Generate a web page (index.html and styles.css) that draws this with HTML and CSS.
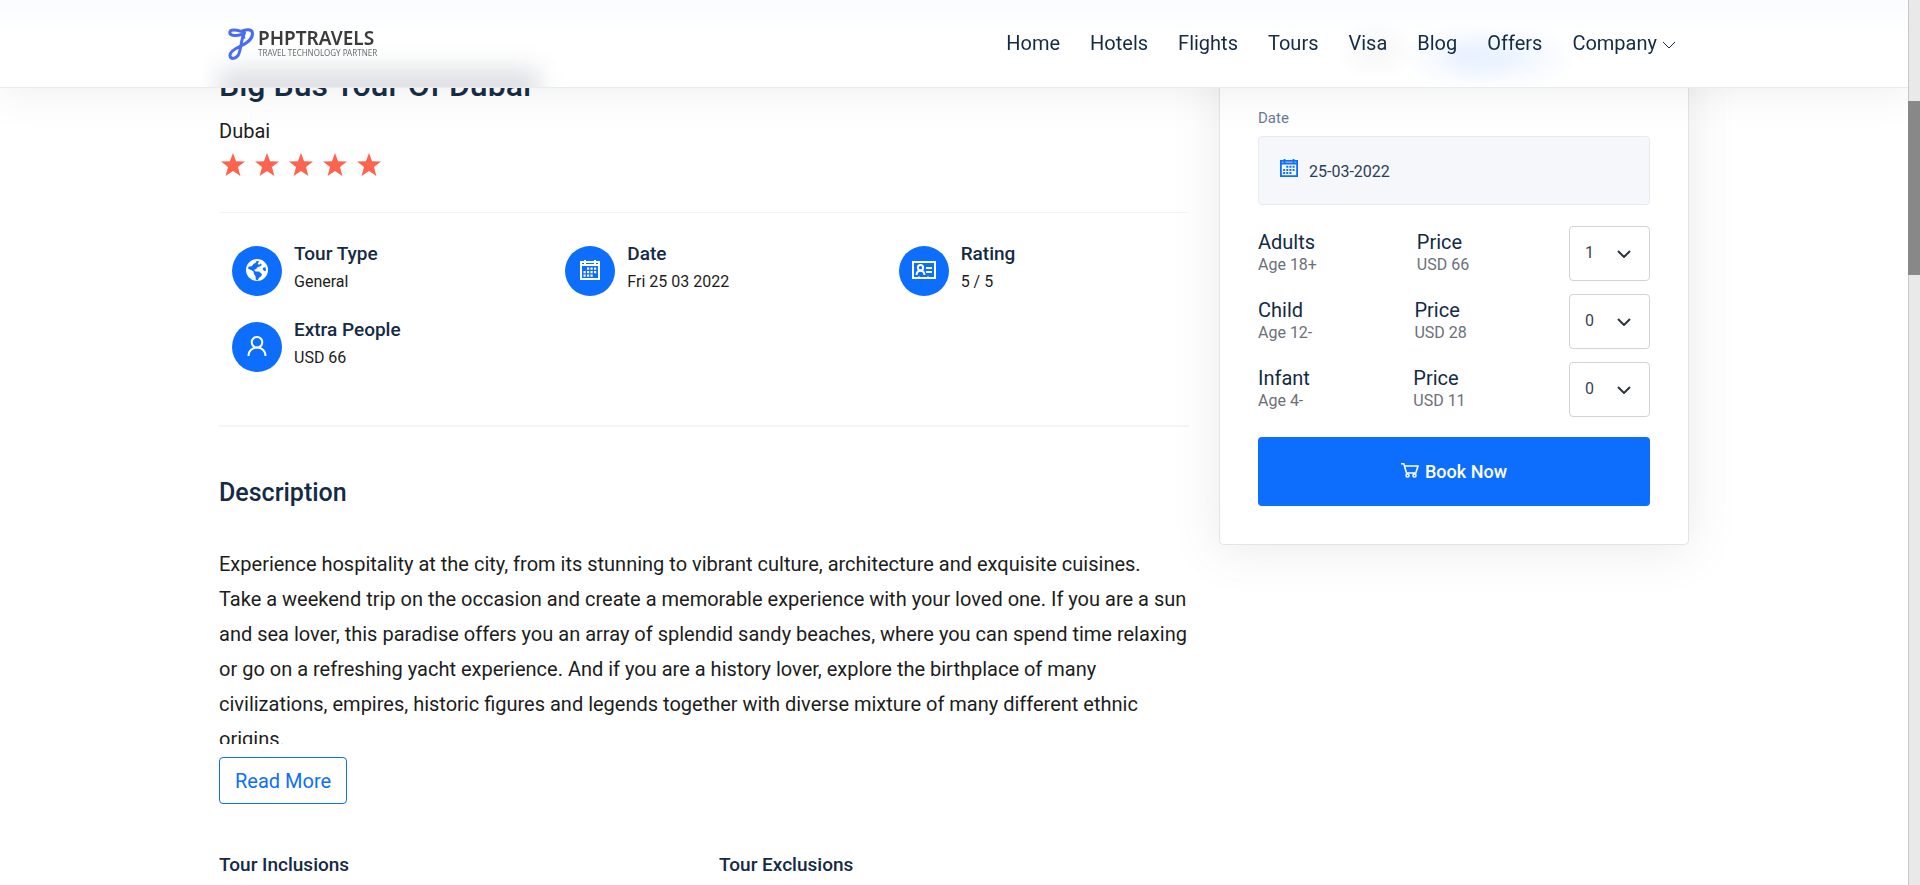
FILE: index.html
```html
<!DOCTYPE html>
<html lang="en">
<head>
<meta charset="utf-8">
<title>Big Bus Tour Of Dubai - PHPTRAVELS</title>
<link rel="stylesheet" href="styles.css">
</head>
<body>
<svg class="sprite" aria-hidden="true">
  <symbol id="star" viewBox="0 0 24 24"><path d="M12 0l3.100 8.200 8.900.4-7 5.500 2.400 8.900-7.400-5.100L4.600 23 7 14.100 0 8.600l8.900-.4z"/></symbol>
  <symbol id="calendar" viewBox="0 0 20 20"><path fill-rule="evenodd" d="M0 1h4V0h2v1h8V0h2v1h4v19H0zM2 3v1h16V3h-2v1h-2V3H6v1H4V3zM2 6v12h16V6z"/><path d="M7 7.500h2.200v2.200H7zM10.500 7.500h2.200v2.200h-2.200zM14 7.500h2.200v2.200H14zM3.500 11h2.200v2.200H3.500zM7 11h2.200v2.200H7zM10.500 11h2.200v2.200h-2.200zM14 11h2.200v2.200H14zM3.500 14.500h2.200v2.200H3.500zM7 14.500h2.200v2.200H7zM10.500 14.500h2.200v2.200h-2.200z"/></symbol>
  <symbol id="globe" viewBox="0 0 22 22"><path fill-rule="evenodd" d="M11 0a11 11 0 1 0 0 22 11 11 0 0 0 0-22zM13.200 2.200L11.500 5l1.800.8 1.500-1.400 1 1.500-2 1.700-2 .4-1.600 2-2.200.9 1.700 1.500 3.300.2 3 2.600-1 2.300-2 1.200-1.400 2.700-1.800-.9-.4-3.400L8 15l-.6-2.700-3-1.500L2 9.500l.7-2 3-.3 1.800-2.200L10 3.500 10.500 2zM17 8.800l2.600-.6.4 3.600-1.800.2-1.400-1.400z"/></symbol>
  <symbol id="card" viewBox="0 0 24 18"><path fill-rule="evenodd" d="M0 0h24v18H0zM2 2v14h4q1-1.500 2 0h7q1-1.500 2 0h5V2z"/><g fill="none" stroke="currentColor" stroke-width="2"><circle cx="8.500" cy="6.700" r="2.600"/><path d="M4.500 14q.3-4.300 4-4.300t4 4.300M14 7h6M14 11h6"/></g></symbol>
  <symbol id="user" viewBox="0 0 20 20"><g fill="none" stroke="currentColor" stroke-width="2"><circle cx="10" cy="6.300" r="5.300"/><path d="M1.500 20c0-5.500 4-8.400 8.500-8.400s8.500 2.900 8.500 8.400"/></g></symbol>
  <symbol id="cart" viewBox="0 0 18 15"><g fill="none" stroke="currentColor" stroke-width="1.600"><path d="M0 .8h2.800L5.500 10h10M4 3h13l-2 6.500"/><circle cx="6.500" cy="12.500" r="1.500"/><circle cx="13.500" cy="12.500" r="1.500"/></g></symbol>
  <symbol id="chevron" viewBox="0 0 14 8"><path d="M1 1l6 6 6-6" fill="none" stroke="currentColor"/></symbol>
</svg>

<header class="header">
  <div class="container header-inner">
    <a class="logo" href="#" aria-label="PHPTRAVELS home">
      <svg class="logo-mark" viewBox="0 0 26 32" stroke="#4a6cf0" stroke-width="3" stroke-linecap="round"><path d="M13.500 6.500C9 7.800 2 8.200 1.800 4.600 1.800.6 8.500 1.800 13 3.300 18 1 24.500.6 24.500 5.500c0 6.500-6 9.700-11.500 12.300C6 21 1.500 24 2 27.800c.5 3.500 5 3.500 7.800 0C13.500 23 12.300 12 16.500 5"/><path d="M13 3.300q3 1.200 3.500 6.700" stroke-width="1.500"/></svg>
      <span class="logo-text"><span class="logo-name">PHPTRAVELS</span><span class="logo-tag">TRAVEL TECHNOLOGY PARTNER</span></span>
    </a>
    <nav class="nav">
      <a href="#">Home</a><a href="#">Hotels</a><a href="#">Flights</a><a href="#">Tours</a><a href="#">Visa</a><a href="#">Blog</a><a href="#">Offers</a>
      <a href="#" class="has-menu">Company <svg class="nav-chevron"><use href="#chevron"/></svg></a>
    </nav>
  </div>
</header>

<main class="container layout">
  <div class="tour">
    <h1>Big Bus Tour Of Dubai</h1>
    <p class="city">Dubai</p>
    <div class="stars" role="img" aria-label="5 stars">
      <svg><use href="#star"/></svg><svg><use href="#star"/></svg><svg><use href="#star"/></svg><svg><use href="#star"/></svg><svg><use href="#star"/></svg>
    </div>
    <section class="features">
      <div class="feature"><span class="badge"><svg width="22" height="22"><use href="#globe"/></svg></span><div><h3>Tour Type</h3><p>General</p></div></div>
      <div class="feature"><span class="badge"><svg width="20" height="20"><use href="#calendar"/></svg></span><div><h3>Date</h3><p>Fri 25 03 2022</p></div></div>
      <div class="feature"><span class="badge"><svg width="24" height="18"><use href="#card"/></svg></span><div><h3>Rating</h3><p>5 / 5</p></div></div>
      <div class="feature"><span class="badge"><svg width="20" height="20"><use href="#user"/></svg></span><div><h3>Extra People</h3><p>USD 66</p></div></div>
    </section>
    <section class="description">
      <h2>Description</h2>
      <p class="excerpt">Experience hospitality at the city, from its stunning to vibrant culture, architecture and exquisite cuisines.<br>Take a weekend trip on the occasion and create a memorable experience with your loved one. If you are a sun and sea lover, this paradise offers you an array of splendid sandy beaches, where you can spend time relaxing or go on a refreshing yacht experience. And if you are a history lover, explore the birthplace of many<br>civilizations, empires, historic figures and legends together with diverse mixture of many different ethnic<br>origins.</p>
      <button class="read-more" type="button">Read More</button>
    </section>
    <div class="lists"><h3>Tour Inclusions</h3><h3>Tour Exclusions</h3></div>
  </div>

  <form class="booking">
    <label class="date-label" for="date">Date</label>
    <div class="date-field"><svg width="18" height="18"><use href="#calendar"/></svg><input id="date" type="text" value="25-03-2022"></div>
    <div class="guests">
      <div class="guest"><label for="adults">Adults<small>Age 18+</small></label><div>Price<small>USD 66</small></div>
        <span class="select"><select id="adults"><option>0</option><option selected>1</option><option>2</option></select><svg><use href="#chevron"/></svg></span></div>
      <div class="guest"><label for="child">Child<small>Age 12-</small></label><div>Price<small>USD 28</small></div>
        <span class="select"><select id="child"><option>0</option><option>1</option></select><svg><use href="#chevron"/></svg></span></div>
      <div class="guest"><label for="infant">Infant<small>Age 4-</small></label><div>Price<small>USD 11</small></div>
        <span class="select"><select id="infant"><option>0</option><option>1</option></select><svg><use href="#chevron"/></svg></span></div>
    </div>
    <button class="book" type="submit"><svg width="18" height="15"><use href="#cart"/></svg>Book Now</button>
  </form>
</main>
<div class="scrollbar" aria-hidden="true"><div class="thumb"></div></div>
</body>
</html>
```
FILE: styles.css
```css
* { box-sizing: border-box; }
html, body { height: 100%; }
body {
  margin: 0;
  padding-right: 12px;
  overflow: hidden;
  background: #fff;
  color: #1c1d20;
  font: 400 20px/30px Roboto, sans-serif;
}
h1, h2, h3, p { margin: 0; }
h1, h2, h3 { color: #142a45; font-weight: 500; }
a { color: inherit; text-decoration: none; }
button, input, select { font-family: inherit; }
svg { display: block; fill: currentColor; }
.sprite { position: absolute; width: 0; height: 0; }

.container { max-width: 1500px; margin: 0 auto; padding: 0 15px; }

.header {
  position: fixed;
  z-index: 2;
  top: 0;
  left: 0;
  right: 12px;
  background: linear-gradient(#f9fbff, #fff 36px);
  border-bottom: 1px solid #ebebec;
  box-shadow: 0 4px 40px rgba(82, 90, 88, .1);
}
/* soft colour of the content passing under the bar */
.header::before {
  content: "";
  position: absolute;
  inset: 0;
  background:
    radial-gradient(42px 30px at 1376px 50px, rgba(20, 30, 45, .04), transparent),
    radial-gradient(60px 34px at 1462px 57px, rgba(13, 110, 253, .07), transparent),
    radial-gradient(70px 34px at 1510px 58px, rgba(13, 110, 253, .07), transparent);
}
.header-inner { position: relative; display: flex; align-items: center; justify-content: space-between; height: 87px; overflow: hidden; }
.header-inner::before {
  content: "";
  position: absolute;
  left: 15px;
  bottom: -18px;
  width: 320px;
  height: 36px;
  background: rgba(13, 30, 55, .14);
  filter: blur(12px);
}
.logo { position: relative; display: flex; align-items: center; gap: 4px; padding-left: 9px; }
.logo-mark { width: 26px; height: 32px; fill: none; }
.logo-text { display: flex; flex-direction: column; font-family: "Noto Sans", sans-serif; }
.logo-name { color: #3b3b3d; font-size: 19px; font-weight: 600; line-height: 18px; }
.logo-tag { color: #6c6d6f; font-size: 8px; line-height: 12px; }
.nav { position: relative; display: flex; gap: 30px; padding: 0 13px 2px 0; color: #142a45; }
.has-menu { display: flex; align-items: center; gap: 5px; }
.nav-chevron { width: 14px; height: 8px; margin-top: 4px; }

.layout { display: grid; grid-template-columns: 97fr 47fr; column-gap: 30px; align-items: start; }
.tour { padding-top: 66px; }
h1 { font-size: 32px; line-height: 38px; }
.city { padding-top: 12px; }
.stars { display: flex; gap: 10px; padding: 7px 0 35px 2px; color: #fd6450; }
.stars svg { width: 24px; height: 24px; }

.features {
  display: grid;
  grid-template-columns: repeat(3, 1fr);
  column-gap: 30px;
  row-gap: 23px;
  padding: 30px 0 53px;
  border-top: 1px solid #f3f5fb;
  border-bottom: 2px solid #f3f5fb;
}
.feature { display: flex; gap: 12px; padding-left: 13px; }
.badge { display: flex; align-items: center; justify-content: center; width: 50px; height: 50px; margin-top: 3px; padding-bottom: 3px; border-radius: 50%; background: #0d6efd; color: #fff; }
h3 { font-size: 19px; line-height: 22px; }
.feature p { padding-top: 5px; font-size: 16px; line-height: 24px; }

h2 { font-size: 25px; line-height: 30px; }
.description { padding-top: 51px; }
.excerpt { height: 197px; margin: 39px 0 13px; overflow: hidden; line-height: 35px; }
.read-more { display: block; height: 47px; padding: 0 15px; border: 1px solid #0d6efd; border-radius: 4px; background: #fff; color: #0d6efd; font-size: 20px; }
.lists { display: grid; grid-template-columns: 1fr 1fr; column-gap: 30px; padding-top: 50px; }

.booking {
  padding: 106px 38px 38px;
  border: 1px solid #e1e4e8;
  border-top: 0;
  border-radius: 0 0 5px 5px;
  background: #fff;
  box-shadow: 0 4px 48px rgba(82, 90, 88, .13);
}
.date-label { display: block; color: #6b7b95; font-size: 15px; line-height: 24px; }
.date-field { display: flex; align-items: center; gap: 11px; height: 69px; margin-top: 6px; padding: 0 21px; border: 1px solid #e6ebf1; border-radius: 4px; background: #f5f7fa; color: #0d6efd; }
.date-field svg { margin-bottom: 6px; }
.date-field input { flex: 1; min-width: 0; padding: 2px 0 0; border: 0; background: none; color: #2c3e55; font-size: 16px; }
.guests { display: grid; gap: 13px; margin: 21px 0 20px; }
.guest { display: flex; align-items: center; justify-content: space-between; color: #142a45; line-height: 24px; }
small { display: block; padding-bottom: 1px; color: #6b7079; font-size: 16px; line-height: 22px; }
.select { position: relative; }
.select select { display: block; appearance: none; width: 81px; height: 55px; padding: 0 15px 2px; border: 1px solid #ced4da; border-radius: 4px; background: #fff; color: #3c444c; font-size: 16px; }
.select svg { position: absolute; right: 19px; top: 24px; width: 14px; height: 8px; color: #2f363d; stroke-width: 2; overflow: visible; pointer-events: none; }
.book { display: flex; align-items: center; justify-content: center; gap: 6px; width: 100%; height: 69px; border: 0; border-radius: 4px; background: #0d6efd; color: #fff; font-size: 18px; font-weight: 500; }
.book svg { margin-bottom: 3px; }

.scrollbar { position: fixed; z-index: 3; top: 0; right: 0; bottom: 0; width: 12px; padding-top: 101px; border-left: 1px solid #c6c6c6; background: #e9e9e9; }
.thumb { width: 12px; height: 174px; margin-left: -1px; background: #888; }
```
